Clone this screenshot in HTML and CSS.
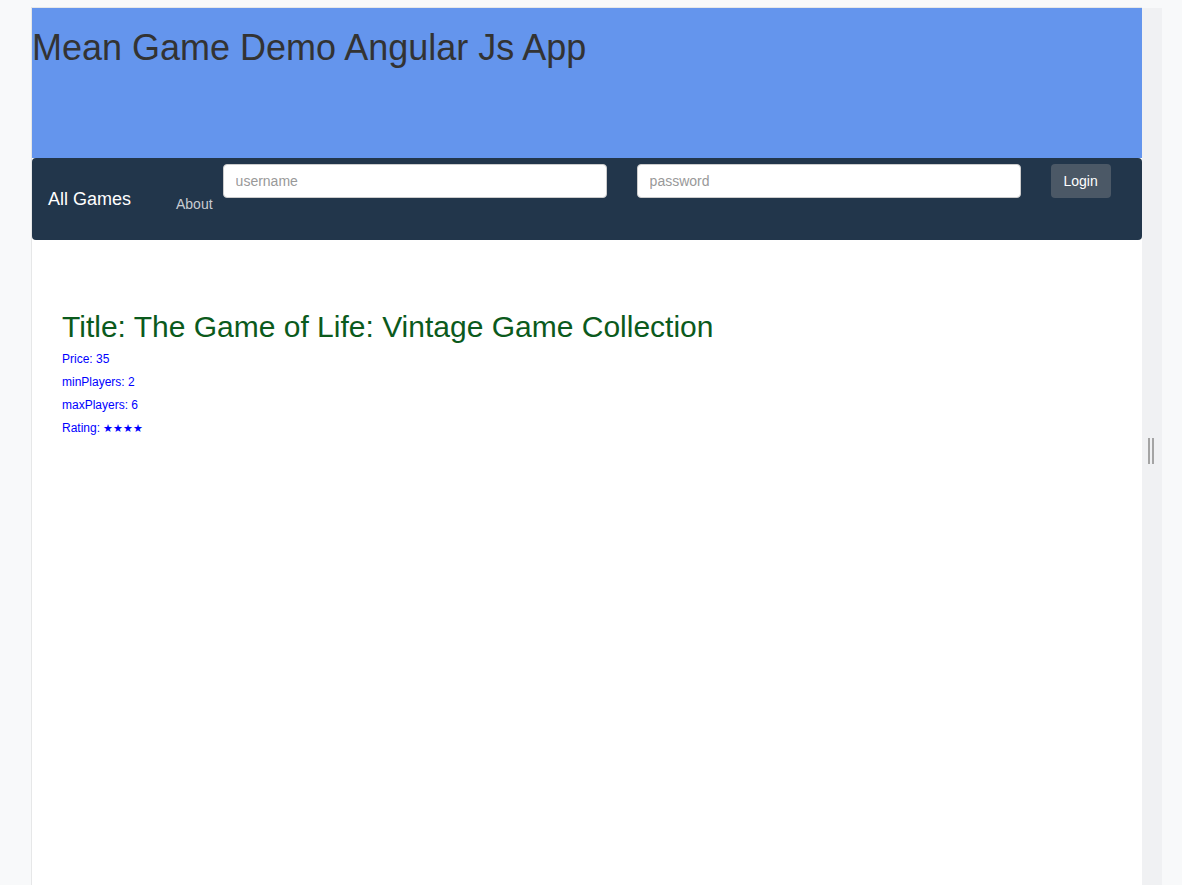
FILE: index.html
```html
<!DOCTYPE html>
<html>
<head>
<meta charset="utf-8">
<title>Mean Game Demo</title>
<link rel="stylesheet" href="styles.css">
</head>
<body>
<div class="frame">
  <div class="page">
    <header class="banner">
      <h1 class="app-title">Mean Game Demo Angular Js App</h1>
    </header>
    <nav class="navbar">
      <a class="brand">All Games</a>
      <a class="nav-link">About</a>
      <input class="field field-user" type="text" placeholder="username">
      <input class="field field-pass" type="password" placeholder="password">
      <button class="login-btn">Login</button>
    </nav>
    <main class="content">
      <h2 class="game-title">Title: The Game of Life: Vintage Game Collection</h2>
      <p class="game-line">Price: 35</p>
      <p class="game-line">minPlayers: 2</p>
      <p class="game-line">maxPlayers: 6</p>
      <p class="game-line">Rating: <span class="stars">★★★★</span></p>
    </main>
  </div>
  <div class="splitter">
    <span class="grip"></span>
  </div>
</div>
</body>
</html>
```
FILE: styles.css
```css
html, body {
  margin: 0;
  padding: 0;
  height: 100%;
}
body {
  background: #f8f9fa;
  font-family: "Liberation Sans", Arial, sans-serif;
  color: #333;
  overflow: hidden;
}
.frame {
  display: flex;
  padding: 7px 0 0 31px;
  height: 100%;
  box-sizing: border-box;
}
.page {
  width: 1110px;
  flex: none;
  background: #fff;
  border-left: 1px solid #e6e7e8;
  border-top: 1px solid #e6e7e8;
}
.banner {
  background: #6495ed;
  height: 150px;
  overflow: hidden;
}
.app-title {
  margin: 0;
  padding-top: 20px;
  font-size: 36px;
  font-weight: 500;
  line-height: 1.1;
  color: #333;
}
.navbar {
  display: flex;
  align-items: flex-start;
  height: 82px;
  box-sizing: border-box;
  background: #22364b;
  border-radius: 4px;
  padding: 6px 0 0 16px;
}
.brand {
  color: #fff;
  font-size: 18px;
  line-height: 20px;
  margin-top: 25px;
  width: 128px;
}
.nav-link {
  color: #c9cdd2;
  font-size: 14px;
  line-height: 20px;
  margin-top: 30px;
  margin-right: 10px;
}
.field {
  width: 384px;
  height: 34px;
  box-sizing: border-box;
  border: 1px solid #ccc;
  border-radius: 4px;
  padding: 6px 12px;
  font-family: inherit;
  font-size: 14px;
  color: #555;
  background: #fff;
}
.field::placeholder {
  color: #999;
}
.field-pass {
  margin-left: 30px;
}
.login-btn {
  margin-left: 30px;
  width: 60px;
  height: 34px;
  border: 0;
  border-radius: 4px;
  background: #4b5866;
  color: #fff;
  font-family: inherit;
  font-size: 14px;
}
.content {
  padding: 50px 30px;
}
.game-title {
  margin: 20px 0 9px;
  font-size: 30px;
  font-weight: 500;
  line-height: 1.1;
  color: #0b5a1c;
}
.game-line {
  margin: 0 0 9px;
  font-size: 12px;
  line-height: 14px;
  color: #0000ff;
}
.stars {
  font-size: 11px;
}
.splitter {
  width: 20px;
  flex: none;
  margin-top: 1px;
  background: #f0f1f3;
  display: flex;
  align-items: center;
  justify-content: center;
}
.grip {
  width: 2px;
  height: 26px;
  border-left: 2px solid #a4a4a4;
  border-right: 2px solid #a4a4a4;
  margin-right: 2px;
  margin-top: 8px;
}
```
